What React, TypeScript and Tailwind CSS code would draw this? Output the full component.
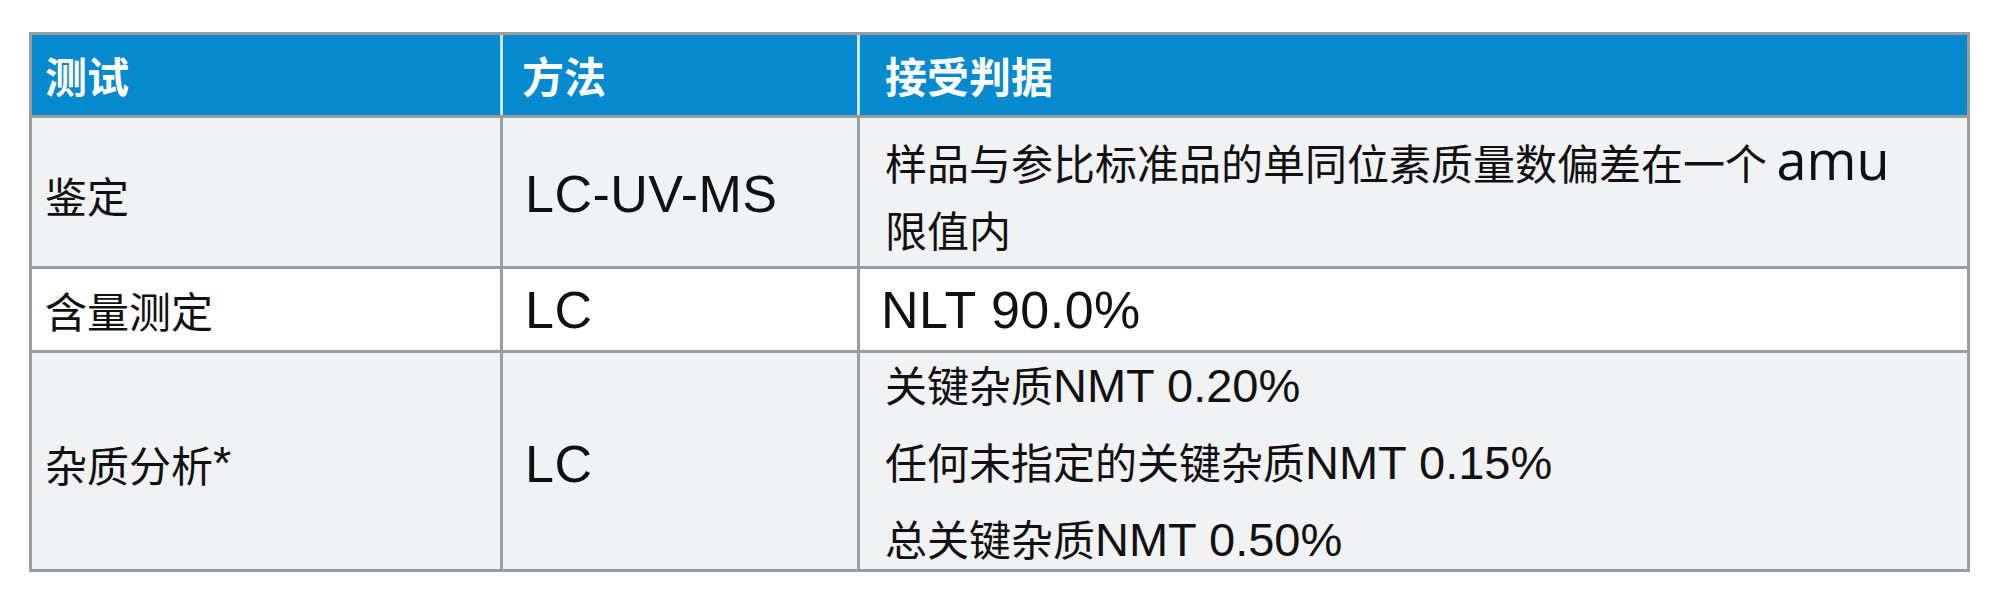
import React from "react";

const L = ({ children, size = "big" }: { children: React.ReactNode; size?: "big" | "small" }) => (
  <span
    className={
      size === "big"
        ? "font-['Liberation_Sans',sans-serif] text-[52px] tracking-[0.5px]"
        : "font-['Liberation_Sans',sans-serif] text-[47px]"
    }
  >
    {children}
  </span>
);

export default function App() {
  const cjk = "font-['Noto_Sans_CJK_SC','Noto_Sans',sans-serif] text-[42px] text-[#111]";
  return (
    <div className="w-[2000px] h-[606px] bg-white pt-[32px] pl-[29px]">
      <div className={`w-[1941px] border-[3px] border-[#9c9c9c] ${cjk}`}>
        {/* header */}
        <div className="grid grid-cols-[468px_357px_1fr] h-[83px] border-b-[3px] border-[#9c9c9c] bg-[#0589cf] text-white font-bold">
          <div className="flex items-center pl-[13px] leading-[80px]">测试</div>
          <div className="flex items-center pl-[19px] border-l-[3px] border-[#cfe5f3] leading-[80px]">方法</div>
          <div className="flex items-center pl-[25px] border-l-[3px] border-[#cfe5f3] leading-[80px]">接受判据</div>
        </div>
        {/* row 1 */}
        <div className="grid grid-cols-[468px_357px_1fr] h-[151px] border-b-[3px] border-[#9c9c9c] bg-[#f1f2f4]">
          <div className="flex items-center pl-[13px] pt-[4px]">鉴定</div>
          <div className="flex items-center pl-[22px] border-l-[3px] border-[#9c9c9c] pt-[4px]">
            <L>LC-UV-MS</L>
          </div>
          <div className="flex flex-col justify-center pl-[25px] border-l-[3px] border-[#9c9c9c] leading-[67px] pt-[4px]">
            <div>
              样品与参比标准品的单同位素质量数偏差在一个{" "}
              <span className="text-[54px] font-['Open_Sans',sans-serif]">amu</span>
            </div>
            <div>限值内</div>
          </div>
        </div>
        {/* row 2 */}
        <div className="grid grid-cols-[468px_357px_1fr] h-[84px] border-b-[3px] border-[#9c9c9c] bg-white">
          <div className="flex items-center pl-[13px]">含量测定</div>
          <div className="flex items-center pl-[22px] border-l-[3px] border-[#9c9c9c]">
            <L>LC</L>
          </div>
          <div className="flex items-center pl-[21px] border-l-[3px] border-[#9c9c9c]">
            <L>NLT 90.0%</L>
          </div>
        </div>
        {/* row 3 */}
        <div className="grid grid-cols-[468px_357px_1fr] h-[216px] bg-[#f1f2f4]">
          <div className="flex items-center pl-[13px] pt-[4px]">
            杂质分析<L size="small">*</L>
          </div>
          <div className="flex items-center pl-[22px] border-l-[3px] border-[#9c9c9c] pt-[4px]">
            <L>LC</L>
          </div>
          <div className="flex flex-col justify-center gap-[15px] pl-[25px] pt-[1px] border-l-[3px] border-[#9c9c9c] leading-[60px]">
            <div>
              关键杂质<L size="small">NMT 0.20%</L>
            </div>
            <div>
              任何未指定的关键杂质<L size="small">NMT 0.15%</L>
            </div>
            <div>
              总关键杂质<L size="small">NMT 0.50%</L>
            </div>
          </div>
        </div>
      </div>
    </div>
  );
}
